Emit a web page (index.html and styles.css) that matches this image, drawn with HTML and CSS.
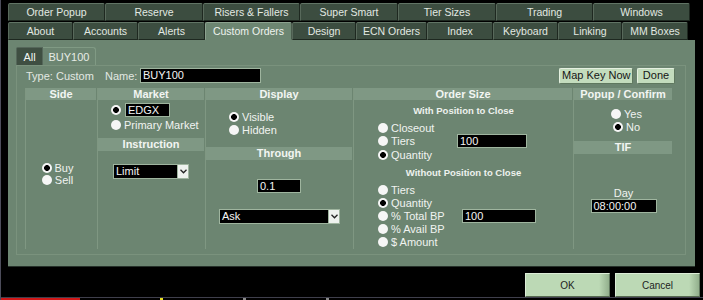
FILE: index.html
```html
<!DOCTYPE html>
<html lang="en">
<head>
    <meta charset="UTF-8">
    <title>Settings - Custom Orders</title>
    <link rel="stylesheet" href="styles.css">
</head>
<body>
    <div class="screen">
        <div class="tabs">
            <div class="tab-row top">
                <div class="tab">Order Popup</div>
                <div class="tab">Reserve</div>
                <div class="tab">Risers &amp; Fallers</div>
                <div class="tab">Super Smart</div>
                <div class="tab">Tier Sizes</div>
                <div class="tab">Trading</div>
                <div class="tab">Windows</div>
            </div>
            <div class="tab-row bottom">
                <div class="tab">About</div>
                <div class="tab">Accounts</div>
                <div class="tab">Alerts</div>
                <div class="tab active">Custom Orders</div>
                <div class="tab">Design</div>
                <div class="tab">ECN Orders</div>
                <div class="tab">Index</div>
                <div class="tab">Keyboard</div>
                <div class="tab">Linking</div>
                <div class="tab">MM Boxes</div>
            </div>
        </div>

        <div class="panel">
            <div class="subtabs">
                <div class="subtab selected">All</div>
                <div class="subtab">BUY100</div>
            </div>

            <div class="order-box">
                <div class="top-row">
                    <span class="type">Type: Custom</span>
                    <span class="name-label">Name:</span>
                    <div class="field name-field">BUY100</div>
                    <div class="top-buttons">
                        <button class="btn-small map-key">Map Key Now</button>
                        <button class="btn-small done">Done</button>
                    </div>
                </div>

                <div class="columns">
                    <div class="col">
                        <div class="col-head">Side</div>
                        <div class="side-body">
                            <div class="opt"><span class="radio checked"></span>Buy</div>
                            <div class="opt"><span class="radio"></span>Sell</div>
                        </div>
                    </div>

                    <div class="col">
                        <div class="col-head">Market</div>
                        <div class="market-body">
                            <div class="opt edgx-row"><span class="radio checked"></span><div class="field edgx-field">EDGX</div></div>
                            <div class="opt"><span class="radio"></span>Primary Market</div>
                        </div>
                        <div class="col-head tall">Instruction</div>
                        <div class="instruction-body">
                            <div class="select limit-select">
                                <span class="select-text">Limit</span>
                                <span class="select-btn"><svg width="7" height="5" viewBox="0 0 7 5"><polyline points="0.5,0.8 3.5,3.8 6.5,0.8" fill="none" stroke="#222" stroke-width="1.3"/></svg></span>
                            </div>
                        </div>
                    </div>

                    <div class="col">
                        <div class="col-head">Display</div>
                        <div class="display-body">
                            <div class="opt row13"><span class="radio checked"></span>Visible</div>
                            <div class="opt row13"><span class="radio"></span>Hidden</div>
                        </div>
                        <div class="col-head tall">Through</div>
                        <div class="through-body">
                            <div class="field through-field">0.1</div>
                            <div class="select ask-select">
                                <span class="select-text">Ask</span>
                                <span class="select-btn"><svg width="7" height="5" viewBox="0 0 7 5"><polyline points="0.5,0.8 3.5,3.8 6.5,0.8" fill="none" stroke="#222" stroke-width="1.3"/></svg></span>
                            </div>
                        </div>
                    </div>

                    <div class="col">
                        <div class="col-head">Order Size</div>
                        <div class="size-body">
                            <div class="subhead">With Position to Close</div>
                            <div class="size-grid with-pos">
                                <div class="opt row13"><span class="radio"></span>Closeout</div>
                                <div class="blank"></div>
                                <div class="opt row13"><span class="radio"></span>Tiers</div>
                                <div class="field size-field">100</div>
                                <div class="opt row13"><span class="radio checked"></span>Quantity</div>
                                <div class="blank"></div>
                            </div>
                            <div class="subhead second">Without Position to Close</div>
                            <div class="size-grid without-pos">
                                <div class="opt row125"><span class="radio"></span>Tiers</div>
                                <div class="blank"></div>
                                <div class="opt row125"><span class="radio checked"></span>Quantity</div>
                                <div class="blank"></div>
                                <div class="opt row125"><span class="radio"></span>% Total BP</div>
                                <div class="field size-field wide">100</div>
                                <div class="opt row125"><span class="radio"></span>% Avail BP</div>
                                <div class="blank"></div>
                                <div class="opt row125"><span class="radio"></span>$ Amount</div>
                                <div class="blank"></div>
                            </div>
                        </div>
                    </div>

                    <div class="col last">
                        <div class="col-head">Popup / Confirm</div>
                        <div class="popup-body">
                            <div class="opt row13"><span class="radio"></span>Yes</div>
                            <div class="opt row13"><span class="radio checked"></span>No</div>
                        </div>
                        <div class="col-head tall">TIF</div>
                        <div class="tif-body">
                            <div class="tif-label">Day</div>
                            <div class="field tif-field">08:00:00</div>
                        </div>
                    </div>
                </div>
            </div>
        </div>

        <div class="actions">
            <button class="btn-big">OK</button>
            <button class="btn-big">Cancel</button>
        </div>

        <div class="under-strip">
            <span class="strip-red"></span>
            <span class="strip-mark yellow"></span>
            <span class="strip-mark"></span>
            <span class="strip-mark"></span>
        </div>
    </div>
</body>
</html>
```

FILE: styles.css
```css
* {
    margin: 0;
    padding: 0;
    box-sizing: border-box;
}

body {
    background: #000;
    font-family: 'Liberation Sans', Arial, sans-serif;
    font-size: 11px;
    color: #eef2ee;
}

.screen {
    width: 703px;
    height: 300px;
    border-left: 1px solid #4c4c5a;
    display: flex;
    flex-direction: column;
    overflow: hidden;
}

/* top tab strip */
.tabs {
    padding: 3px 0 0 7px;
    display: flex;
    flex-direction: column;
    gap: 1px;
}

.tab-row {
    display: grid;
    height: 18px;
}

.tab-row.top {
    grid-template-columns: 97px 98px 97px 98px 98px 97px 97px;
}

.tab-row.bottom {
    grid-template-columns: 65px 65px 67px 87px 64px 71px 66px 65px 64px 66px;
}

.tab {
    background: #3c4d40;
    border: 1px solid;
    border-color: #617465 #1e2820 #1e2820 #58695b;
    border-radius: 2px 2px 0 0;
    color: #e2e9e2;
    font-size: 10.5px;
    display: flex;
    align-items: center;
    justify-content: center;
    white-space: nowrap;
}

.tab.active {
    background: #6c8571;
    border-color: #8ca28f #4a5c4d #6c8571 #8ca28f;
    color: #eef3ee;
}

/* main panel */
.panel {
    margin-left: 7px;
    width: 687px;
    height: 227px;
    background: #6c8571;
    border-bottom: 1px solid #26312a;
    padding: 7px 0 0 8px;
}

.subtabs {
    display: flex;
    height: 18px;
}

.subtab {
    width: 53px;
    display: flex;
    align-items: center;
    justify-content: center;
    border: 1px solid #809a84;
    border-bottom: none;
    border-left: none;
    border-radius: 0 3px 0 0;
    color: #e6ece6;
    font-size: 11px;
}

.subtab.selected {
    width: 27px;
    background: #3f4f42;
    border: 1px solid #55675a;
    border-bottom: none;
    border-radius: 2px 0 0 0;
    color: #f2f5f2;
}

.order-box {
    width: 670px;
    height: 190px;
    border: 1px solid #7a927d;
    padding: 2px 10px 0 8px;
}

.top-row {
    display: flex;
    align-items: center;
    height: 15px;
    font-size: 11px;
    color: #e2e8e2;
}

.type {
    width: 80px;
    padding-left: 1px;
}

.name-label {
    width: 35px;
}

.field {
    background: #000;
    border: 1px solid #9fb59f;
    color: #f4f4f4;
    font-size: 11px;
    height: 14px;
    line-height: 12px;
    padding-left: 2px;
    white-space: nowrap;
}

.name-field {
    width: 121px;
    height: 15px;
    line-height: 13px;
}

.top-buttons {
    margin-left: auto;
    display: flex;
    gap: 4px;
}

.btn-small {
    height: 16px;
    padding: 0 2px;
    background: #c3dcbd;
    border: 1px solid;
    border-color: #e4f0e0 #5e775e #5e775e #e4f0e0;
    border-radius: 2px;
    font-family: inherit;
    font-size: 11px;
    line-height: 13px;
    color: #151515;
    white-space: nowrap;
}

.map-key {
    width: 74px;
}

.done {
    width: 38px;
}

/* columns grid */
.columns {
    margin-top: 5px;
    display: grid;
    grid-template-columns: 72px 108px 148px 220px 100px;
    height: 161px;
}

.col {
    border-left: 1px solid #7f9782;
    display: flex;
    flex-direction: column;
}

.col-head {
    background: #7f9884;
    height: 12px;
    line-height: 12px;
    margin-right: 1px;
    text-align: center;
    font-weight: bold;
    font-size: 11px;
    color: #f2f5f2;
}

.col-head.tall {
    height: 13px;
    line-height: 13px;
}

.opt {
    display: flex;
    align-items: center;
    gap: 3px;
    height: 12px;
    line-height: 12px;
    font-size: 11px;
    color: #f0f3f0;
    white-space: nowrap;
}

.row13 {
    height: 13px;
}

.row125 {
    height: 12.5px;
}

.radio {
    width: 10px;
    height: 10px;
    border-radius: 50%;
    background: #f6f6f6;
    flex-shrink: 0;
}

.radio.checked {
    background: radial-gradient(circle, #000 0 2.6px, #f6f6f6 3.2px);
}

.side-body {
    flex: 1;
    display: flex;
    flex-direction: column;
    justify-content: center;
    align-items: center;
    padding-right: 8px;
    padding-bottom: 1px;
}

.market-body {
    height: 38px;
    padding: 3px 0 0 13px;
    display: flex;
    flex-direction: column;
    gap: 2px;
}

.edgx-row {
    height: 14px;
    gap: 4px;
}

.edgx-field {
    width: 45px;
}

.instruction-body {
    padding: 13px 0 0 15px;
}

.select {
    display: flex;
    height: 15px;
    background: #000;
    border: 1px solid #9fb59f;
}

.select-text {
    flex: 1;
    padding-left: 2px;
    font-size: 11px;
    line-height: 13px;
    color: #f4f4f4;
}

.select-btn {
    width: 11px;
    background: #eef2ee;
    border-left: 1px solid #9fb59f;
    display: flex;
    align-items: center;
    justify-content: center;
}

.limit-select {
    width: 76px;
}

.display-body {
    height: 47px;
    padding: 10px 0 0 23px;
}

.through-body {
    padding: 19px 0 0 0;
}

.through-field {
    width: 44px;
    margin-left: 51px;
}

.ask-select {
    width: 121px;
    margin: 16px 0 0 13px;
}

.size-body {
    padding: 5px 0 0 24px;
}

.subhead {
    height: 12px;
    line-height: 12px;
    font-size: 9.5px;
    font-weight: bold;
    color: #eef2ee;
    text-align: center;
    padding-right: 24px;
}

.subhead.second {
    margin-top: 6px;
}

.size-grid {
    display: grid;
    align-items: center;
}

.size-grid.with-pos {
    grid-template-columns: 79px 70px;
    margin-top: 4px;
}

.size-grid.without-pos {
    grid-template-columns: 84px 74px;
    margin-top: 5px;
}

.size-field {
    width: 70px;
}

.size-field.wide {
    width: 74px;
}

.popup-body {
    height: 41px;
    padding-top: 7px;
    display: flex;
    flex-direction: column;
    align-items: center;
    padding-left: 6px;
}

.tif-body {
    padding-top: 33px;
    display: flex;
    flex-direction: column;
    align-items: center;
}

.tif-label {
    height: 12px;
    line-height: 12px;
    font-size: 11px;
    color: #f0f3f0;
}

.tif-field {
    width: 66px;
}

/* dialog buttons */
.actions {
    display: flex;
    justify-content: flex-end;
    gap: 5px;
    padding-right: 3px;
    margin-top: 6px;
}

.btn-big {
    width: 85px;
    height: 24px;
    background: linear-gradient(90deg, #bcd9b5 0, #bcd9b5 88%, #93b08d 100%);
    border: 1px solid;
    border-color: #dcecd7 #62795f #55694f #dcecd7;
    font-family: inherit;
    font-size: 10px;
    color: #1e1e1e;
}

/* window peeking out below */
.under-strip {
    margin-top: auto;
    height: 3px;
    border-top: 1px solid #3f3f4c;
    display: flex;
    gap: 80px;
}

.strip-red {
    width: 79px;
    background: #d01818;
}

.strip-mark {
    width: 3px;
    background: #8a8a8a;
}

.strip-mark.yellow {
    background: #e8e020;
}
```
